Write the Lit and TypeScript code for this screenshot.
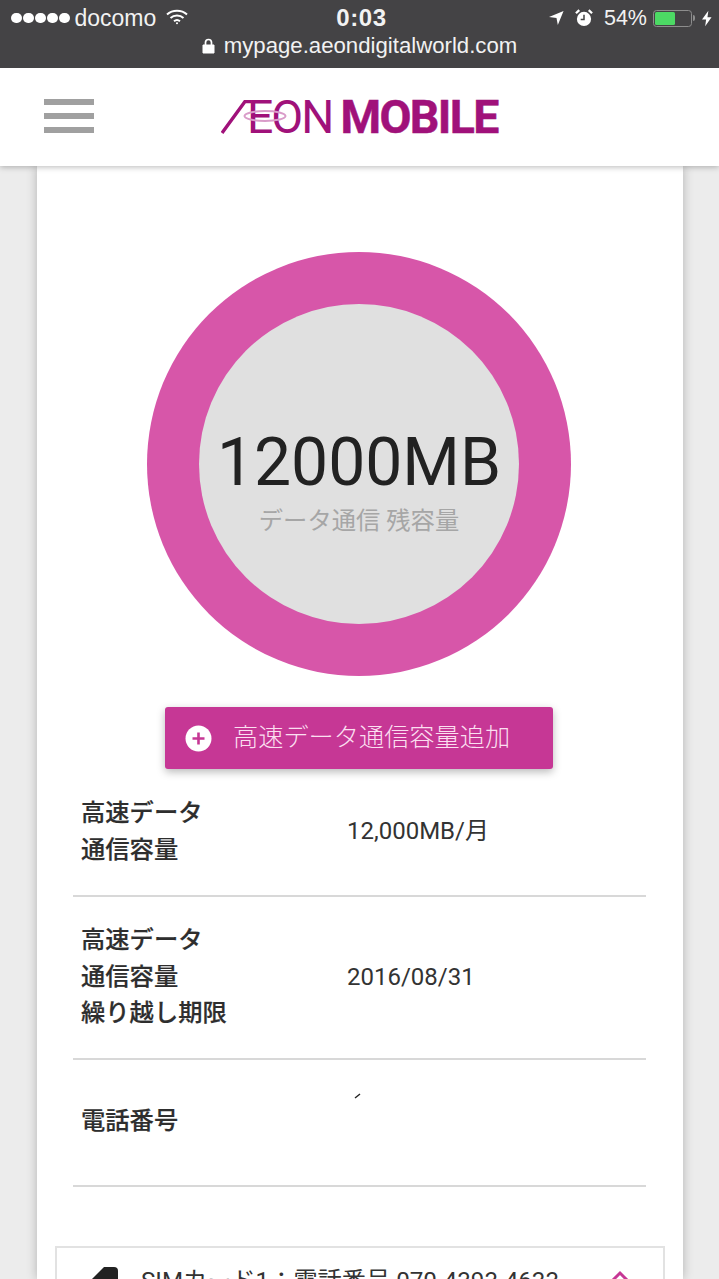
import { LitElement, html, css } from "lit";
import { customElement } from "lit/decorators.js";

@customElement("app-root")
export class AppRoot extends LitElement {
  static styles = css`
    :host { display: block; width: 719px; height: 1279px; overflow: hidden; background: #ececec; font-family: Roboto, "Noto Sans CJK JP", sans-serif; position: relative; }
    .top { height: 68px; background: #444345; color: #f2f2f2; font-family: "Liberation Sans", sans-serif; display: flex; flex-direction: column; position: relative; z-index: 3; }
    .status { height: 36px; display: grid; grid-template-columns: 1fr auto 1fr; align-items: center; padding: 0 7px 0 11px; font-size: 23px; }
    .left { display: flex; align-items: center; }
    .dots { display: flex; gap: 1.5px; margin-right: 5px; }
    .dots i { width: 10.5px; height: 10.5px; border-radius: 50%; background: #fff; }
    .wifi { margin-left: 10px; margin-top: -3px; }
    .time { font-weight: 700; font-size: 24px; letter-spacing: .6px; }
    .right { display: flex; align-items: center; justify-content: flex-end; font-size: 21.5px; }
    .alarm { margin-left: 11px; }
    .pct { margin-left: 11px; margin-right: 6px; }
    .batt { width: 39px; height: 17px; border: 1px solid #8d8d8d; border-radius: 3.5px; padding: 1px; box-sizing: border-box; }
    .batt b { display: block; width: 20px; height: 100%; background: #4cd964; border-radius: 1.5px; }
    .nub { width: 2px; height: 6px; background: #8d8d8d; margin: 0 7px 0 1px; border-radius: 0 2px 2px 0; }
    .url { display: flex; justify-content: center; align-items: center; gap: 9px; font-size: 22.2px; line-height: 22px; margin-top: -1px; }
    .header { height: 98px; background: #fff; display: flex; align-items: center; position: relative; z-index: 2; box-shadow: 0 1px 6px rgba(0,0,0,.28); }
    .burger { display: flex; flex-direction: column; gap: 8.5px; margin-left: 44px; margin-top: -2px; }
    .burger i { display: block; width: 50px; height: 5.5px; background: #a0a0a0; }
    .logo { display: flex; align-items: center; margin-left: 127px; color: #a0117a; height: 36px; position: relative; margin-top: -1px; }
    .slash { display: block; margin-right: -4px; }
    .eon { font-family: Roboto, sans-serif; font-weight: 400; font-size: 46.4px; letter-spacing: -2px; line-height: 36px; }
    .mobile { font-family: Roboto, sans-serif; font-weight: 700; font-size: 46.4px; letter-spacing: -1.6px; line-height: 36px; margin-left: 8px; -webkit-text-stroke: .5px #a0117a; }
    .ring { position: absolute; left: 22px; top: 9px; }
    .sheet { width: 646px; margin-left: 37px; height: 1113px; background: #fff; box-shadow: 0 0 10px rgba(0,0,0,.25); display: flex; flex-direction: column; align-items: center; padding-top: 86px; box-sizing: border-box; position: relative; z-index: 1; }
    .donut { flex: none; width: 424px; height: 424px; border-radius: 50%; background: #d756a9; display: flex; align-items: center; justify-content: center; box-sizing: border-box; margin-right: 2px; }
    .hole { width: 320px; height: 320px; border-radius: 50%; background: #e0e0e0; display: flex; flex-direction: column; align-items: center; padding-top: 125px; box-sizing: border-box; }
    .amount { font-size: 66px; line-height: 68px; color: #222; font-weight: 400; white-space: nowrap; }
    .sub { font-size: 24.3px; line-height: 34px; color: #a6a6a6; margin-top: 7px; white-space: nowrap; font-weight: 400; }
    .btn { flex: none; width: 388px; height: 62px; margin-top: 31px; margin-right: 2px; background: #c63795; border-radius: 3px; box-shadow: 0 3px 8px rgba(0,0,0,.28); color: #fbdff0; display: flex; align-items: center; font-size: 25.2px; font-weight: 300; box-sizing: border-box; padding-left: 20px; gap: 21px; white-space: nowrap; }
    .btn span { margin-top: -7px; }
    .rows { flex: none; width: 573px; margin-top: 23px; align-self: flex-start; margin-left: 36px; }
    .row { display: grid; grid-template-columns: 266px 1fr; align-items: start; border-bottom: 2px solid #d8d8d8; padding: 0 8px; box-sizing: border-box; color: #2e2e2e; }
    .r1 { height: 105px; }
    .r2 { height: 163px; }
    .r3 { height: 127px; }
    .lab { font-size: 24.3px; line-height: 36.5px; font-weight: 500; -webkit-text-stroke: .2px #2e2e2e; }
    .val { font-size: 24px; line-height: 28px; position: relative; color: #333; }
    .r1 .lab { padding-top: 3px; }
    .r1 .val { padding-top: 25px; }
    .r2 .lab { padding-top: 25px; }
    .r2 .val { padding-top: 66px; }
    .r3 .lab { padding-top: 43px; }
    .tick { position: absolute; left: 7px; top: 33px; }
    .sim { flex: none; width: 610px; height: 60px; margin-top: 59px; align-self: flex-start; margin-left: 18px; border: 2px solid #e2e2e2; box-sizing: border-box; display: flex; align-items: flex-start; padding: 13px 34px 0 35px; font-size: 24.2px; color: #333; white-space: nowrap; }
    .simicon { margin-top: 6px; margin-right: 23px; flex: none; }
    .chev { margin-left: auto; margin-top: 9px; }
  `;

  render() {
    return html`
      <div class="top">
        <div class="status">
          <div class="left">
            <span class="dots"><i></i><i></i><i></i><i></i><i></i></span>
            <span>docomo</span>
            <svg class="wifi" width="22" height="16" viewBox="0 0 22 16" fill="none" stroke="#fff" stroke-width="2"><path d="M1 5.5C6.5 .5 15.5 .5 21 5.5"/><path d="M4.5 9C8 5.8 14 5.8 17.5 9"/><path d="M8 12.2c1.8-1.5 4.2-1.5 6 0"/><circle cx="11" cy="14.2" r="1" fill="#fff" stroke="none"/></svg>
          </div>
          <div class="time">0:03</div>
          <div class="right">
            <svg width="15" height="16" viewBox="0 0 17 17"><path d="M0 7.5 16.5 .5 10 16.5 8.5 8.5Z" fill="#fff"/></svg>
            <svg class="alarm" width="18" height="18" viewBox="0 0 19 19"><circle cx="9.5" cy="10.5" r="7.5" fill="#fff"/><path d="M9.5 6v5H6" stroke="#444" stroke-width="1.6" fill="none"/><path d="M1 4.5 4.5 1.2M18 4.5 14.5 1.2" stroke="#fff" stroke-width="2.4"/></svg>
            <span class="pct">54%</span>
            <span class="batt"><b></b></span><span class="nub"></span>
            <svg width="10" height="17" viewBox="0 0 11 17"><path d="M7 0 0 9.5h4.5L3.5 17l7-10H6Z" fill="#fff"/></svg>
          </div>
        </div>
        <div class="url">
          <svg width="13" height="16" viewBox="0 0 13 16"><path d="M1 7h11v8H1Z" fill="#fff" stroke="#fff" stroke-linejoin="round"/><path d="M3.5 7V4.5a3 3 0 0 1 6 0V7" fill="none" stroke="#fff" stroke-width="1.7"/></svg>
          <span>mypage.aeondigitalworld.com</span>
        </div>
      </div>
      <div class="header">
        <div class="burger"><i></i><i></i><i></i></div>
        <div class="logo">
          <svg class="slash" width="30" height="34" viewBox="0 0 30 34"><path d="M1 33 24 1.5h6" fill="none" stroke="#a0117a" stroke-width="3.4"/></svg>
          <span class="eon">EON</span>
          <span class="mobile">MOBILE</span>
          <svg class="ring" width="44" height="16" viewBox="0 0 44 16"><ellipse cx="22" cy="8" rx="20.5" ry="5" fill="none" stroke="#d99cc9" stroke-width="2"/></svg>
        </div>
      </div>
      <div class="sheet">
        <div class="donut">
          <div class="hole">
            <div class="amount">12000MB</div>
            <div class="sub">データ通信 残容量</div>
          </div>
        </div>
        <div class="btn">
          <svg width="27" height="27" viewBox="0 0 27 27"><circle cx="13.5" cy="13.5" r="13" fill="#fff"/><path d="M13.5 7.5v12M7.5 13.5h12" stroke="#c63795" stroke-width="2.6"/></svg>
          <span>高速データ通信容量追加</span>
        </div>
        <div class="rows">
          <div class="row r1"><div class="lab">高速データ<br />通信容量</div><div class="val">12,000MB/月</div></div>
          <div class="row r2"><div class="lab">高速データ<br />通信容量<br />繰り越し期限</div><div class="val">2016/08/31</div></div>
          <div class="row r3"><div class="lab">電話番号</div><div class="val"><svg class="tick" width="8" height="6" viewBox="0 0 8 6"><path d="M1 5 6 1" stroke="#222" stroke-width="1.4"/></svg></div></div>
        </div>
        <div class="sim">
          <svg class="simicon" width="26" height="40" viewBox="0 0 26 40"><path d="M12 0h10a4 4 0 0 1 4 4v36H0V12Z" fill="#222"/></svg>
          <span>SIMカード1：電話番号 070-4393-4633</span>
          <svg class="chev" width="18" height="12" viewBox="0 0 18 12"><path d="M2 10 9 3l7 7" fill="none" stroke="#c63795" stroke-width="3"/></svg>
        </div>
      </div>
    `;
  }
}
